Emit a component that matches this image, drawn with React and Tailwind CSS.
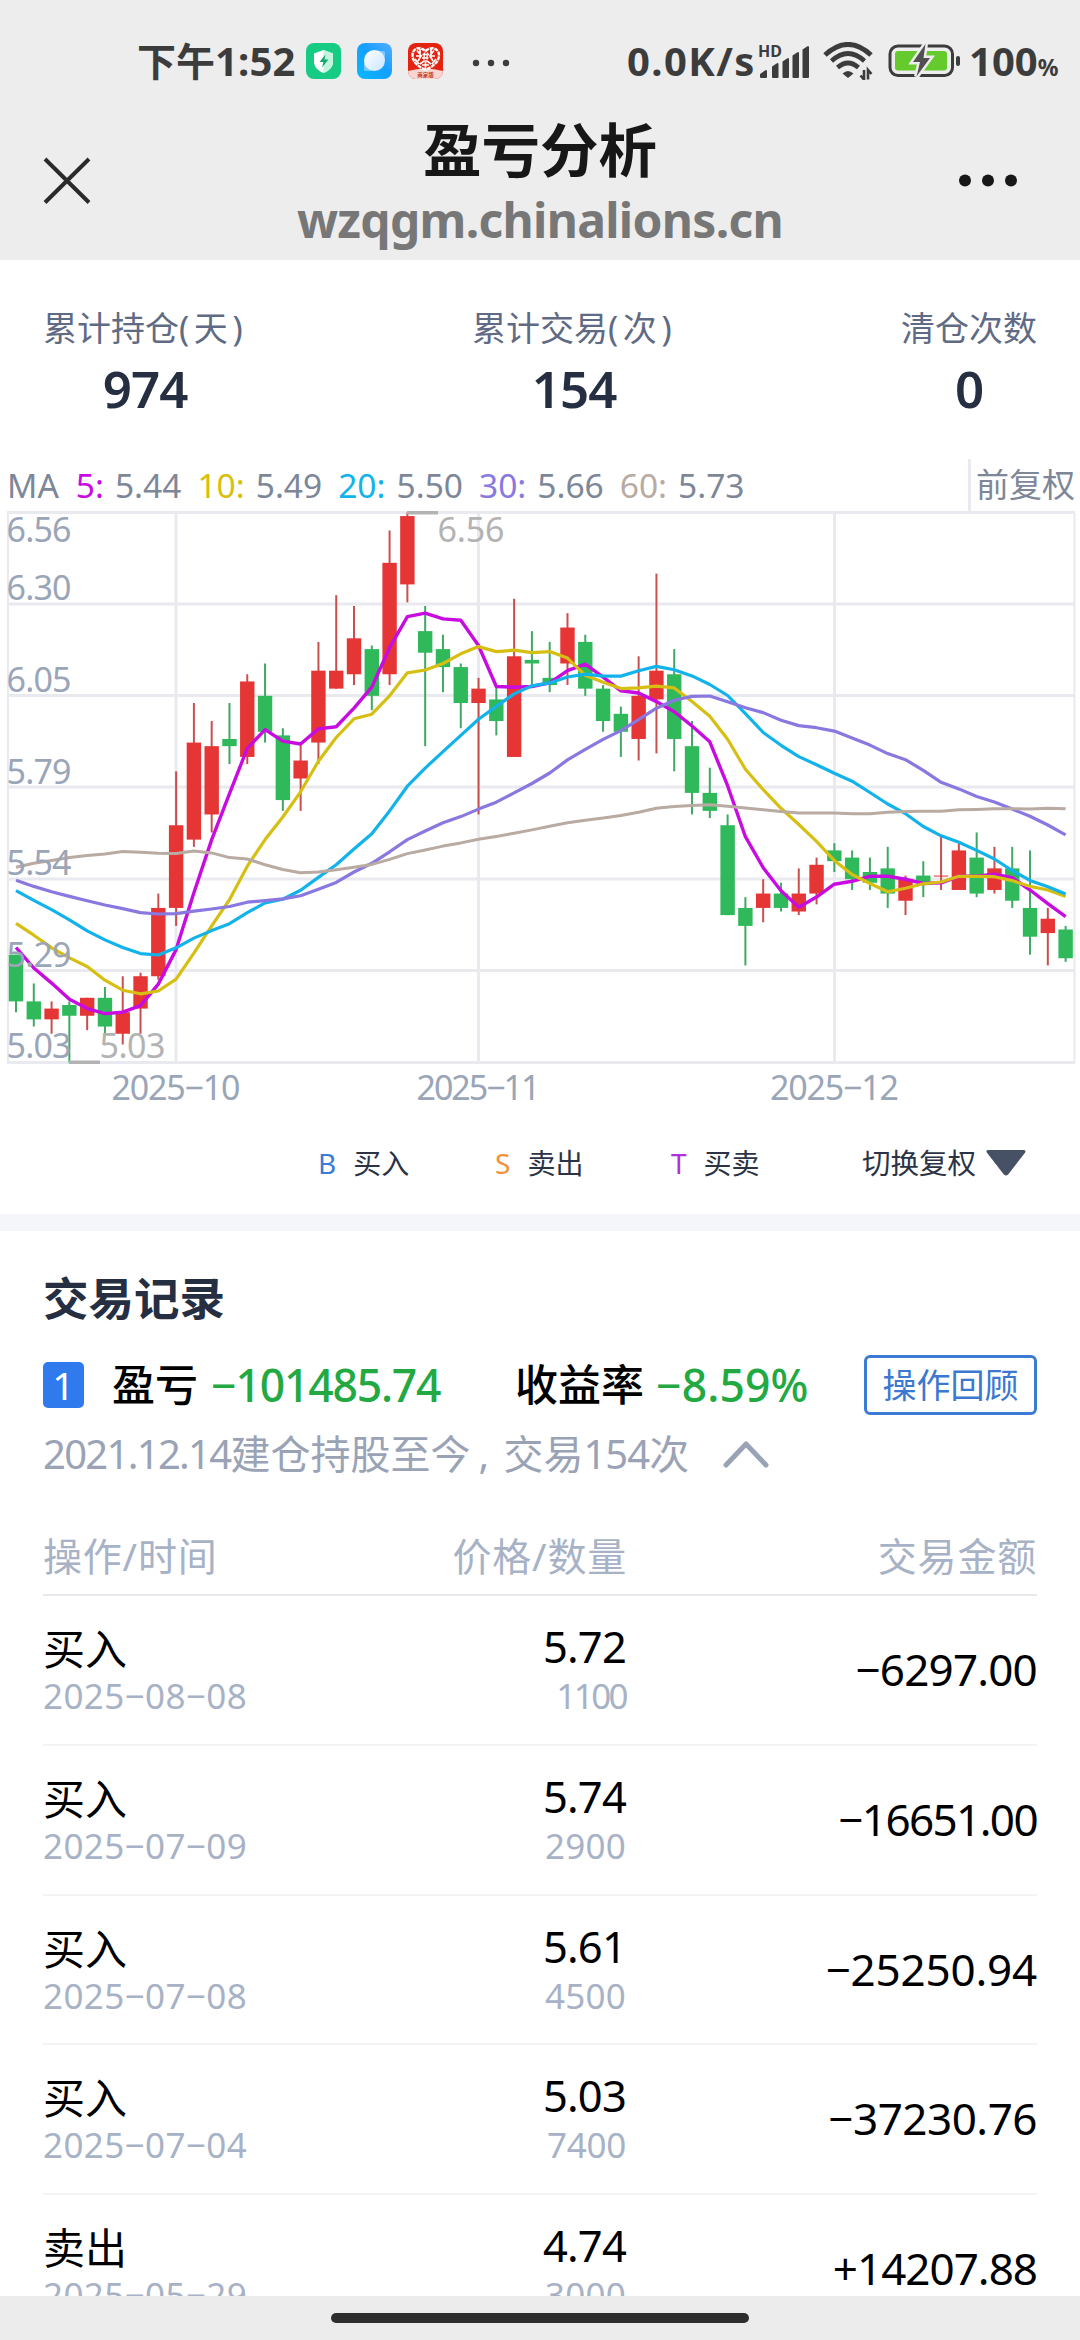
import { Fragment } from 'react';

const FONT = "font-['Noto_Sans','Noto_Sans_CJK_SC',sans-serif]";

const stats = [
  { label: '累计持仓', unit: '(天)', value: '974' },
  { label: '累计交易', unit: '(次)', value: '154' },
  { label: '清仓次数', value: '0' }
];

const maLegend = [
  { name: '5:', value: '5.44', color: 'text-[#c80be0]' },
  { name: '10:', value: '5.49', color: 'text-[#d8c00c]' },
  { name: '20:', value: '5.50', color: 'text-[#12b2ea]' },
  { name: '30:', value: '5.66', color: 'text-[#8878e0]' },
  { name: '60:', value: '5.73', color: 'text-[#b9aaa2]' }
];

// [open, close, high, low]
const candles = [
  [5.33, 5.2, 5.33, 5.17], [5.2, 5.15, 5.25, 5.13], [5.15, 5.18, 5.2, 5.11], [5.19, 5.16, 5.2, 5.03],
  [5.16, 5.21, 5.21, 5.12], [5.21, 5.13, 5.24, 5.11], [5.11, 5.17, 5.27, 5.08], [5.18, 5.27, 5.28, 5.11],
  [5.27, 5.46, 5.5, 5.26], [5.46, 5.69, 5.84, 5.41], [5.65, 5.92, 6.03, 5.63], [5.72, 5.91, 5.98, 5.67],
  [5.93, 5.91, 6.03, 5.86], [5.88, 6.09, 6.11, 5.86], [6.05, 5.95, 6.14, 5.92], [5.94, 5.76, 5.96, 5.73],
  [5.82, 5.87, 5.92, 5.73], [5.92, 6.12, 6.2, 5.86], [6.07, 6.12, 6.33, 6.07], [6.11, 6.21, 6.3, 6.08],
  [6.18, 6.05, 6.19, 6.01], [6.11, 6.42, 6.51, 6.08], [6.36, 6.55, 6.56, 6.31], [6.23, 6.17, 6.3, 5.91],
  [6.18, 6.13, 6.22, 6.06], [6.13, 6.03, 6.14, 5.96], [6.03, 6.07, 6.1, 5.72], [6.04, 5.98, 6.08, 5.94],
  [5.88, 6.16, 6.32, 5.88], [6.15, 6.14, 6.23, 6.08], [6.1, 6.08, 6.2, 6.06], [6.14, 6.24, 6.28, 6.08],
  [6.2, 6.07, 6.22, 6.05], [6.07, 5.98, 6.08, 5.95], [6, 5.95, 6.02, 5.88], [5.93, 6.05, 6.16, 5.87],
  [6.04, 6.12, 6.39, 5.89], [6.11, 5.93, 6.18, 5.84], [5.91, 5.78, 5.98, 5.72], [5.78, 5.73, 5.85, 5.71],
  [5.69, 5.44, 5.72, 5.44], [5.46, 5.41, 5.49, 5.3], [5.46, 5.5, 5.54, 5.42], [5.5, 5.46, 5.53, 5.45],
  [5.45, 5.5, 5.57, 5.44], [5.5, 5.58, 5.6, 5.47], [5.62, 5.59, 5.64, 5.56], [5.6, 5.54, 5.62, 5.51],
  [5.56, 5.53, 5.6, 5.51], [5.57, 5.5, 5.63, 5.46], [5.48, 5.54, 5.55, 5.44], [5.55, 5.53, 5.59, 5.49],
  [5.55, 5.55, 5.66, 5.51], [5.51, 5.62, 5.64, 5.51], [5.6, 5.5, 5.67, 5.49], [5.51, 5.57, 5.63, 5.5],
  [5.57, 5.48, 5.63, 5.46], [5.46, 5.38, 5.62, 5.33], [5.39, 5.43, 5.46, 5.3], [5.4, 5.32, 5.41, 5.31]
];

// averages for the days whose window starts before the first candle
const maSeries = [
  { days: 5, color: '#c80be0', width: 3.4, seed: [5.35, 5.293, 5.251, 5.206] },
  { days: 10, color: '#d6bf12', width: 3.2, seed: [5.417, 5.384, 5.349, 5.321, 5.297, 5.259, 5.231, 5.221, 5.229] },
  {
    days: 20, color: '#12b2ea', width: 3.2,
    seed: [5.508, 5.481, 5.455, 5.427, 5.396, 5.371, 5.35, 5.333, 5.329, 5.349, 5.376, 5.397, 5.416, 5.447, 5.474, 5.484, 5.509, 5.545, 5.58]
  },
  {
    days: 30, color: '#8878e0', width: 3.2,
    seed: [5.537, 5.52, 5.505, 5.492, 5.48, 5.468, 5.458, 5.447, 5.443, 5.444, 5.451, 5.457, 5.464, 5.476, 5.48, 5.485, 5.494, 5.512, 5.531, 5.56, 5.584, 5.616, 5.65, 5.674, 5.697, 5.714, 5.735, 5.754, 5.78]
  },
  {
    days: 60, color: '#b9aaa2', width: 3,
    seed: [
      5.573, 5.584, 5.592, 5.6, 5.606, 5.61, 5.617, 5.615, 5.612, 5.611, 5.618, 5.613, 5.6, 5.596, 5.58, 5.567, 5.558, 5.56, 5.566, 5.573,
      5.581, 5.595, 5.611, 5.621, 5.632, 5.641, 5.651, 5.659, 5.668, 5.677, 5.687, 5.697, 5.704, 5.71, 5.717, 5.726, 5.737, 5.742, 5.745, 5.747,
      5.743, 5.738, 5.733, 5.728, 5.724, 5.724, 5.724, 5.722, 5.722, 5.726, 5.728, 5.729, 5.729, 5.733, 5.734, 5.736, 5.736, 5.735, 5.737, 5.736
    ]
  }
];

const gridRows = [
  { y: 1.5, label: '6.56', text: 31 },
  { y: 93, label: '6.30', text: 89 },
  { y: 184.5, label: '6.05', text: 180.5 },
  { y: 276, label: '5.79', text: 272.5 },
  { y: 368, label: '5.54', text: 364 },
  { y: 459.5, label: '5.29', text: 455.5 },
  { y: 551.5, label: '5.03', text: 546.5 }
];

const gridCols = [
  { x: 176, label: '2025−10', width: 129 },
  { x: 478.5, label: '2025−11', width: 124 },
  { x: 834.5, label: '2025−12', width: 129 }
];

const records = [
  { type: '买入', date: '2025−08−08', price: '5.72', qty: '1100', amount: '−6297.00', qtyTracking: 'tracking-[-2.6px]', amountTracking: 'tracking-[-0.8px]' },
  { type: '买入', date: '2025−07−09', price: '5.74', qty: '2900', amount: '−16651.00', qtyTracking: 'tracking-[0.2px]', amountTracking: 'tracking-[-1.6px]' },
  { type: '买入', date: '2025−07−08', price: '5.61', qty: '4500', amount: '−25250.94', qtyTracking: 'tracking-[0.2px]', amountTracking: 'tracking-[-0.2px]' },
  { type: '买入', date: '2025−07−04', price: '5.03', qty: '7400', amount: '−37230.76', qtyTracking: 'tracking-[-0.3px]', amountTracking: 'tracking-[-0.5px]' },
  { type: '卖出', date: '2025−05−29', price: '4.74', qty: '3000', amount: '+14207.88', qtyTracking: 'tracking-[0.2px]', amountTracking: 'tracking-[-1px]' }
];

const xAt = (i) => 16 + i * 17.79;
const yAt = (price) => 1.5 + ((6.56 - price) / 1.53) * 550;

const linePoints = ({ days, seed }) =>
  candles
    .map((_, i) => {
      const value = i < seed.length
        ? seed[i]
        : candles.slice(i - days + 1, i + 1).reduce((sum, c) => sum + c[1], 0) / days;
      return `${xAt(i).toFixed(1)},${yAt(value).toFixed(1)}`;
    })
    .join(' ');

const StatusBar = () => (
  <div className="flex h-[122px] shrink-0 items-center pl-[137px] text-[#3c3c3c]">
    <div className="flex w-[169px] shrink-0 items-center whitespace-nowrap font-bold leading-[50px]">
      <span className="text-[39px]">下午</span>
      <span className="text-[40px] tracking-[0.2px]">1:52</span>
    </div>
    <div className="flex shrink-0 items-center gap-4">
      <svg width="35" height="36" viewBox="0 0 35 36">
        <rect width="35" height="36" rx="8" fill="#16cc85" />
        <path d="M17.500 7 27 10.500v8c0 6-4.500 9.500-9.500 11.500C12.500 28 8 24.500 8 18.500v-8z" fill="#fff" />
        <path d="M17.500 7 27 10.500v8c0 6-4.500 9.500-9.500 11.500z" fill="#c2f5df" />
        <path d="M19.500 11.500 13.500 19h4l-1.500 5.500 6.500-8h-4z" fill="#12a86e" />
      </svg>
      <svg width="35" height="36" viewBox="0 0 35 36">
        <defs>
          <linearGradient id="sky" x1="0" y1="1" x2="1" y2="0">
            <stop offset="0" stopColor="#06b9ff" />
            <stop offset=".55" stopColor="#169fff" />
            <stop offset="1" stopColor="#55adff" />
          </linearGradient>
          <linearGradient id="planet" x1="0" y1="0" x2="1" y2="1">
            <stop offset="0" stopColor="#fff" />
            <stop offset="1" stopColor="#c9e6ff" />
          </linearGradient>
        </defs>
        <rect width="35" height="36" rx="8" fill="url(#sky)" />
        <path d="M20 8h6q3 0 2 3v6L15 28H9q-3 0-2-3v-6z" fill="#8fd0ff" opacity=".8" />
        <circle cx="17.500" cy="17.500" r="10.500" fill="url(#planet)" />
      </svg>
      <svg width="35" height="36" viewBox="0 0 35 36">
        <rect width="35" height="36" rx="8" fill="#e3230f" />
        <path d="M0 28q17.500-5 35 0a8 8 0 0 1-8 8H8a8 8 0 0 1-8-8" fill="#fad5d0" />
        <path d="M17.500 27C10 23.500 4.500 19 4.500 12 4.500 6 11 2.500 17.500 8 24 2.500 31 6 31 12 31 19 25 23.500 17.500 27" fill="none" stroke="#fff" strokeWidth="2.400" strokeDasharray="4 .8" />
        <path d="M9 7.500l4 5M8 13h5l-3 5M26 7.500l-4 5M27 13h-5l3 5M12 21l4-3 3 0 4 3M17.500 19v7M14 22l7 0M12 6v6M23 6v6M7 16l4 5M28 16l-4 5" fill="none" stroke="#fff" strokeWidth="1.700" />
        <path d="M14.500 11.500h6.500M14 15h6.500M16.500 9.500l-.6 7M19.500 9.500l-.6 7" stroke="#fff" strokeWidth="1.400" />
        <text x="17.500" y="34" textAnchor="middle" fontSize="5.500" fontWeight="700" fill="#c33a28">商家版</text>
      </svg>
    </div>
    <svg width="44" height="12" viewBox="0 0 44 12" className="ml-[26px] mt-1 shrink-0" fill="#3c3c3c">
      <circle cx="7" cy="6" r="3.200" />
      <circle cx="22" cy="6" r="3.200" />
      <circle cx="37" cy="6" r="3.200" />
    </svg>
    <span className="ml-[114px] w-[131px] shrink-0 whitespace-nowrap text-[40px] font-bold leading-[50px] tracking-[1.4px]">0.0K/s</span>
    <div className="relative h-[36px] w-[54px] shrink-0">
      <span className="absolute left-0 top-[-2px] text-[16px] font-bold leading-[20px]">HD</span>
      <svg width="54" height="36" viewBox="0 0 54 36" fill="#3c3c3c" stroke="#3c3c3c" strokeWidth="2" strokeLinejoin="round">
        <path d="M3 34v-2.500L8 28v6z" />
        <path d="M15 34V24l4.500-3v13z" />
        <path d="M25.500 34V19l4.500-3v18z" />
        <path d="M35.500 34V13l4.500-3v24z" />
        <path d="M45.500 34V7l4.500-3v30z" />
      </svg>
    </div>
    <svg width="50" height="38" viewBox="0 0 50 38" className="ml-[11px] shrink-0" fill="none" stroke="#3c3c3c">
      <path d="M2 13Q25-8 48 13" strokeWidth="5" />
      <path d="M8.500 19Q25 4 41.500 19" strokeWidth="4.600" />
      <path d="M14.500 25.500Q25 16.500 35.500 25.500" strokeWidth="4.600" />
      <path d="M19.500 31.500q5.500-5 11 0l-5.500 4.500z" fill="#3c3c3c" stroke="none" />
      <path d="M41 28v9.500l-3.500-4M45 37.500V28l3.500 4" strokeWidth="2.600" />
    </svg>
    <svg width="74" height="36" viewBox="0 0 74 36" className="ml-[15px] shrink-0">
      <rect x="2" y="3" width="62.500" height="29.500" rx="8" fill="none" stroke="#3c3c3c" strokeWidth="3" />
      <rect x="7" y="8" width="52" height="19.500" rx="3" fill="#65ca2b" />
      <rect x="68" y="13" width="4" height="10" rx="2" fill="#3c3c3c" />
      <path d="M37.500 1 25 19h7l-3.500 14.500L42 15h-6.500z" fill="#505050" stroke="#ededed" strokeWidth="5" paintOrder="stroke" />
    </svg>
    <span className="ml-[7px] text-[40px] font-bold leading-[50px]">100</span>
    <span className="mt-[11px] text-[23px] font-bold leading-[30px]">%</span>
  </div>
);

const TitleBar = () => (
  <div className="flex h-[138px] shrink-0 justify-between px-[43px]">
    <svg width="48" height="48" viewBox="0 0 48 48" className="mt-[35px]" stroke="#2a2a2a" strokeWidth="4">
      <path d="M2 2 46 45.500M46 2 2 45.500" />
    </svg>
    <div className="ml-[36px] flex flex-col items-center whitespace-nowrap font-bold">
      <h1 className="mt-[-2px] text-[58.5px] leading-[58px] text-[#171717]">盈亏分析</h1>
      <p className="mt-[9px] text-[48px] leading-[66px] tracking-[-0.7px] text-[#777]">wzqgm.chinalions.cn</p>
    </div>
    <svg width="64" height="16" viewBox="0 0 64 16" className="mr-[20px] mt-[51px]" fill="#171717">
      <circle cx="12" cy="7.500" r="6" />
      <circle cx="35" cy="7.500" r="6" />
      <circle cx="58" cy="7.500" r="6" />
    </svg>
  </div>
);

const KLineChart = () => (
  <svg width="1080" height="600" viewBox="0 0 1080 600" className="block">
    {gridRows.map((row) => (
      <line key={row.label} x1="7" x2="1075" y1={row.y} y2={row.y} stroke="#e9eaf0" strokeWidth="3" />
    ))}
    {[8, 1074.5].map((x) => (
      <line key={x} x1={x} x2={x} y1="2" y2="552" stroke="#e9eaf0" strokeWidth="2" />
    ))}
    {gridCols.map((col) => (
      <line key={col.label} x1={col.x} x2={col.x} y1="2" y2="552" stroke="#e9eaf0" strokeWidth="3" />
    ))}

    {candles.map(([open, close, high, low], i) => {
      const color = close >= open ? '#e53535' : '#2fb95a';
      const wick = close >= open ? '#c94f4f' : '#3fa863';
      const x = xAt(i);
      const top = yAt(Math.max(open, close));
      const height = Math.max(yAt(Math.min(open, close)) - top, 1);
      return (
        <Fragment key={i}>
          <line x1={x} x2={x} y1={yAt(high)} y2={yAt(low)} stroke={wick} strokeWidth="2" />
          <rect x={x - 7.2} y={top} width="14.400" height={height} fill={color} />
        </Fragment>
      );
    })}

    {maSeries.map((ma) => (
      <polyline key={ma.days} points={linePoints(ma)} fill="none" stroke={ma.color} strokeWidth={ma.width} strokeLinejoin="round" />
    ))}

    <g fill="#9aa5b8" fontSize="34">
      {gridRows.map((row) => (
        <text key={row.label} x="6.500" y={row.text} textLength="65">{row.label}</text>
      ))}
      {gridCols.map((col) => (
        <text key={col.label} x={col.x} y="588.500" textAnchor="middle" textLength={col.width}>{col.label}</text>
      ))}
    </g>

    <g fill="#b3b3b3" fontSize="34">
      <rect x="407" y="0" width="31" height="3.500" />
      <text x="437.500" y="31" textLength="67">6.56</text>
      <rect x="69" y="549.500" width="31" height="3.500" />
      <text x="99.500" y="546.500" textLength="66">5.03</text>
    </g>
  </svg>
);

const RecordRow = ({ record }) => (
  <div className="flex h-[149.8px] shrink-0 border-b-2 border-[#f2f3f5]">
    <div className="w-[240px] pt-[26px]">
      <p className="text-[42px] leading-[54px] text-black">{record.type}</p>
      <p className="mt-[-4px] text-[35px] leading-[48px] tracking-[0.4px] text-[#a8b2c6]">{record.date}</p>
    </div>
    <div className="w-[343px] pt-[23px] text-right">
      <p className="text-[43.5px] leading-[54px] tracking-[-0.8px] text-black">{record.price}</p>
      <p className={`mt-[-1px] text-[35px] leading-[48px] text-[#a8b2c6] ${record.qtyTracking}`}>{record.qty}</p>
    </div>
    <p className={`flex-1 pt-[46px] text-right text-[44px] leading-[54px] text-black ${record.amountTracking}`}>{record.amount}</p>
  </div>
);

export default function App() {
  return (
    <div className={`flex h-[2340px] w-[1080px] flex-col overflow-hidden bg-white ${FONT}`}>
      <header className="h-[260px] shrink-0 bg-[#ededed]">
        <StatusBar />
        <TitleBar />
      </header>

      {/* Summary */}
      <section className="flex h-[199px] shrink-0 justify-between px-[43px] pt-[44px]">
        {stats.map((item) => (
          <div key={item.label} className="flex flex-col items-center">
            <span className="text-[34px] leading-[48px] text-[#5f6a84]">
              {item.label}
              {item.unit && <span className="tracking-[4.6px]">{item.unit}</span>}
            </span>
            <span className="mt-[6px] text-[51px] font-semibold leading-[60px] tracking-[-1px] text-[#262f42]">{item.value}</span>
          </div>
        ))}
      </section>

      {/* Chart */}
      <section className="h-[52px] shrink-0">
        <div className="flex h-full items-center pl-[7px] text-[33.5px] text-[#7d8798]">
          <span>MA</span>
          <div className="ml-[17px] flex flex-1 gap-[16px]">
            {maLegend.map((item) => (
              <div key={item.name} className="flex gap-[11px]">
                <span className={item.color}>{item.name}</span>
                <span>{item.value}</span>
              </div>
            ))}
          </div>
          <span className="flex h-full w-[112px] items-center whitespace-nowrap border-l-3 border-[#e9eaf0] pl-[5px] text-[33px]">前复权</span>
        </div>
      </section>
      <KLineChart />

      <section className="flex h-[103px] shrink-0 items-center pl-[318px] text-[28px] leading-[40px] text-[#2b3345]">
        <div className="flex w-[177px] gap-[17px]">
          <span className="text-[#3b7bd6]">B</span>
          <span>买入</span>
        </div>
        <div className="flex w-[176px] gap-[17px]">
          <span className="text-[#f0923a]">S</span>
          <span>卖出</span>
        </div>
        <div className="flex w-[191px] gap-[17px]">
          <span className="text-[#b02fe0]">T</span>
          <span>买卖</span>
        </div>
        <span className="text-[28.5px]">切换复权</span>
        <svg width="42" height="28" viewBox="0 0 42 28" className="ml-[9px]">
          <path d="M3 2.500h36L22 24.500q-1 1-2 0z" fill="#465166" stroke="#465166" strokeWidth="3" strokeLinejoin="round" />
        </svg>
      </section>

      <div className="h-[17px] shrink-0 bg-[#f4f6fa]" />

      {/* Records */}
      <section className="flex min-h-0 flex-1 flex-col overflow-hidden px-[43px] pt-[37px]">
        <h2 className="text-[45.5px] font-bold leading-[60px] text-[#262f42]">交易记录</h2>

        <div className="mt-[27px] flex h-[60px] shrink-0 items-center whitespace-nowrap text-[43px] font-medium leading-[60px]">
          <span className="flex h-[46px] w-[41px] items-center justify-center rounded-[5px] bg-[#2f7aec] text-[39px] font-normal text-white">1</span>
          <span className="ml-[28px] text-black">盈亏</span>
          <span className="ml-[13px] w-[304px] text-[44.5px] tracking-[-1.2px] text-[#22a942]">−101485.74</span>
          <span className="text-black">收益率</span>
          <span className="ml-[12px] text-[44.5px] tracking-[0.1px] text-[#22a942]">−8.59%</span>
          <button className="ml-auto h-[60px] w-[173px] rounded-[6px] border-3 border-[#3b7bd6] text-[34px] font-normal leading-[54px] text-[#3b78d0]">操作回顾</button>
        </div>

        <div className="mt-[10px] flex h-[58px] shrink-0 items-center whitespace-nowrap text-[40px] leading-[58px] text-[#9aa3b5]">
          <span className="tracking-[-1.7px]">2021.12.14</span>
          <span>建仓持股至今</span>
          <span className="ml-[8px] w-[25px]">,</span>
          <span>交易</span>
          <span className="tracking-[-1px]">154</span>
          <span>次</span>
          <svg width="50" height="32" viewBox="0 0 50 32" className="ml-[32px]" fill="none" stroke="#9aa3b5" strokeWidth="5" strokeLinecap="round" strokeLinejoin="round">
            <path d="M5 27 25 6 45 27" />
          </svg>
        </div>

        <div className="flex h-[113px] shrink-0 whitespace-nowrap border-b-2 border-[#e8e9ed] pt-[43px] text-[39px] leading-[60px] tracking-[0.8px] text-[#a8b2c6]">
          <span className="w-[240px]">操作/时间</span>
          <span className="w-[344px] text-right">价格/数量</span>
          <span className="flex-1 text-right">交易金额</span>
        </div>

        {records.map((record) => (
          <RecordRow key={record.date} record={record} />
        ))}
      </section>

      <footer className="flex h-[44px] shrink-0 justify-center bg-[#ececec] pt-[17px]">
        <div className="h-[10px] w-[418px] rounded-full bg-[#2e2e2e]" />
      </footer>
    </div>
  );
}
